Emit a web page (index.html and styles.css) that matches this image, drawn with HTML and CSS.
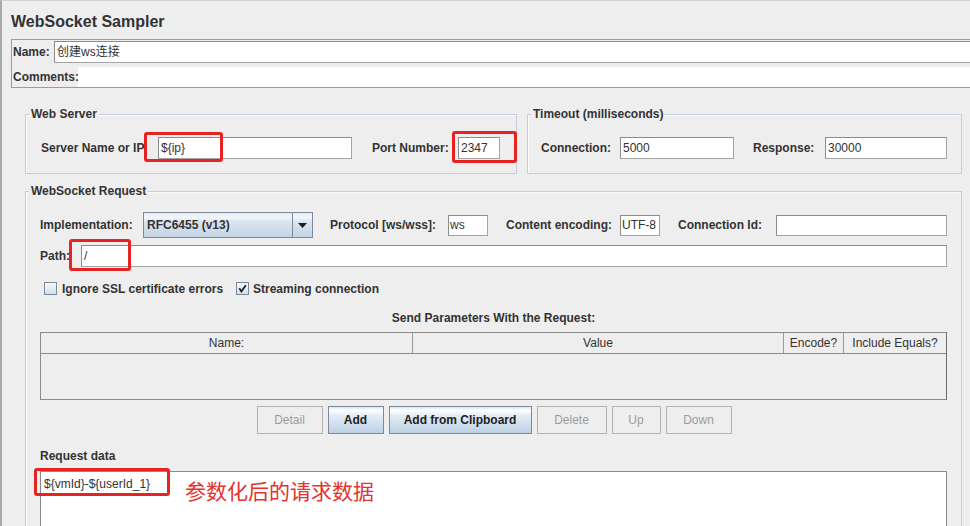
FILE: index.html
```html
<!DOCTYPE html>
<html>
<head>
<meta charset="utf-8">
<title>WebSocket Sampler</title>
<link rel="stylesheet" href="styles.css">
</head>
<body>
<div class="page">
  <h1 class="title">WebSocket Sampler</h1>

  <div class="namebox">
    <div class="nrow">
      <span class="lbl nl-name">Name:</span>
      <div class="field grow">创建ws连接</div>
    </div>
    <div class="nrow crow">
      <span class="lbl nl-comm">Comments:</span>
      <div class="comment-field"></div>
    </div>
  </div>

  <div class="top-groups">
    <div class="group g-server">
      <div class="legend">Web Server</div>
      <div class="srow server-row">
        <span class="lbl l-server">Server Name or IP</span>
        <div class="field f-server">${ip}</div>
        <span class="lbl l-port">Port Number:</span>
        <div class="field f-port">2347</div>
      </div>
    </div>
    <div class="group g-timeout">
      <div class="legend">Timeout (milliseconds)</div>
      <div class="srow timeout-row">
        <span class="lbl l-conn">Connection:</span>
        <div class="field f-conn">5000</div>
        <span class="lbl l-resp">Response:</span>
        <div class="field f-resp">30000</div>
      </div>
    </div>
  </div>

  <div class="group g-request">
    <div class="legend">WebSocket Request</div>

    <div class="rrow impl-row">
      <span class="lbl l-impl">Implementation:</span>
      <div class="combo">
        <span class="combo-text">RFC6455 (v13)</span>
        <span class="combo-btn">
          <svg width="9" height="5" viewBox="0 0 9 5"><path d="M0 0 H9 L4.5 5 Z" fill="#1e1e1e"/></svg>
        </span>
      </div>
      <span class="lbl l-proto">Protocol [ws/wss]:</span>
      <div class="field f-small">ws</div>
      <span class="lbl l-enc">Content encoding:</span>
      <div class="field f-small">UTF-8</div>
      <span class="lbl l-connid">Connection Id:</span>
      <div class="field f-connid"></div>
    </div>

    <div class="rrow path-row">
      <span class="lbl l-path">Path:</span>
      <div class="field f-path">/</div>
    </div>

    <div class="check-row">
      <span class="cbox"></span>
      <span class="lbl cl-ssl">Ignore SSL certificate errors</span>
      <span class="cbox checked">
        <svg width="11" height="11" viewBox="0 0 11 11"><path d="M2.3 5.2 L4.4 8.4 L8.8 2.2" fill="none" stroke="#1a1a1a" stroke-width="1.7"/></svg>
      </span>
      <span class="lbl cl-stream">Streaming connection</span>
    </div>

    <div class="params-title">Send Parameters With the Request:</div>

    <div class="table">
      <div class="thead">
        <div class="th">Name:</div>
        <div class="th">Value</div>
        <div class="th">Encode?</div>
        <div class="th th-last">Include Equals?</div>
      </div>
      <div class="tbody"></div>
    </div>

    <div class="buttons">
      <div class="btn disabled b-detail">Detail</div>
      <div class="btn b-add">Add</div>
      <div class="btn b-clip">Add from Clipboard</div>
      <div class="btn disabled b-delete">Delete</div>
      <div class="btn disabled b-up">Up</div>
      <div class="btn disabled b-down">Down</div>
    </div>

    <div class="lbl data-label">Request data</div>
    <div class="textarea">${vmId}-${userId_1}</div>
  </div>

  <div class="mark m-ip"></div>
  <div class="mark m-port"></div>
  <div class="mark m-path"></div>
  <div class="mark m-data"></div>
  <div class="note">参数化后的请求数据</div>
</div>
</body>
</html>
```

FILE: styles.css
```css
* { box-sizing: border-box; }

html, body {
  margin: 0;
  padding: 0;
}

body {
  width: 970px;
  height: 526px;
  overflow: hidden;
  background: #eeeeee;
  font-family: "Liberation Sans", "Noto Sans CJK SC", sans-serif;
  font-size: 12px;
  color: #333333;
}

.page {
  position: relative;
  width: 970px;
  height: 526px;
  overflow: hidden;
  border-left: 2px solid #a9a9a9;
  border-top: 1px solid #d2d2d2;
}

.title {
  margin: 11px 0 0 9px;
  font-size: 16px;
  line-height: 20px;
  font-weight: bold;
  color: #333333;
}

/* Name / Comments */
.namebox {
  margin: 7px 0 0 9px;
  width: 990px;
  border: 1px solid #9c9c9c;
  padding: 1px 0 0 1px;
}

.nrow {
  display: flex;
  align-items: center;
  height: 22px;
}

.crow {
  height: 21px;
  margin-top: 3px;
}

.lbl {
  font-weight: bold;
  white-space: nowrap;
  flex: none;
  line-height: 14px;
}

.nl-name { width: 41px; }
.nl-comm { width: 65px; }

.field {
  flex: none;
  height: 22px;
  line-height: 20px;
  padding: 0 2px;
  background: #ffffff;
  border: 1px solid #8c8c8c;
  border-right-color: #a4a4a4;
  border-bottom-color: #a4a4a4;
  white-space: nowrap;
  overflow: hidden;
  color: #333333;
}

.grow { flex: 1; }

.comment-field {
  flex: 1;
  height: 20px;
  align-self: flex-end;
  background: #ffffff;
}

/* Groups */
.top-groups {
  display: flex;
  margin-top: 26px;
}

.group {
  border: 1px solid #c3ced9;
  box-shadow: inset 1px 1px 0 #fafafa;
}

.legend {
  width: max-content;
  margin: -8px 0 0 3px;
  padding: 0 2px;
  line-height: 14px;
  font-weight: bold;
  background: #eeeeee;
  color: #333333;
}

.g-server {
  margin-left: 23px;
  width: 492px;
}

.g-timeout {
  margin-left: 10px;
  width: 435px;
}

.srow {
  display: flex;
  align-items: center;
  height: 22px;
  margin: 16px 0 14px;
}

.server-row { padding-left: 15px; }
.l-server { width: 117px; }
.f-server { width: 194px; }
.l-port { margin-left: 20px; width: 86px; }
.f-port { width: 42px; }

.timeout-row { padding-left: 13px; }
.l-conn { width: 79px; }
.f-conn { width: 114px; }
.l-resp { margin-left: 19px; width: 72px; }
.f-resp { width: 122px; }

/* WebSocket Request */
.g-request {
  margin: 17px 0 0 23px;
  width: 937px;
  height: 400px;
}

.rrow {
  display: flex;
  align-items: center;
  padding-left: 14px;
}

.impl-row {
  height: 26px;
  margin-top: 14px;
}

.l-impl { width: 103px; }

.combo {
  flex: none;
  display: flex;
  width: 170px;
  height: 26px;
  border: 1px solid #7a8a99;
  background: linear-gradient(#e3ebf3 0%, #f4f7fa 18%, #dbe5ef 35%, #c4d4e4 100%);
}

.combo-text {
  flex: 1;
  padding-left: 3px;
  line-height: 24px;
  font-weight: bold;
  color: #333333;
}

.combo-btn {
  width: 20px;
  display: flex;
  align-items: center;
  justify-content: center;
  border-left: 1px solid #7a8a99;
}

.l-proto { margin-left: 17px; width: 118px; }
.f-small { width: 40px; height: 21px; line-height: 19px; padding: 0 1px; }
.l-enc { margin-left: 18px; width: 114px; }
.l-connid { margin-left: 18px; width: 98px; }
.f-connid { width: 171px; height: 21px; }

.path-row {
  height: 22px;
  margin-top: 7px;
}

.l-path { width: 41px; }
.f-path { width: 866px; }

.check-row {
  display: flex;
  align-items: center;
  height: 17px;
  margin-top: 13px;
  padding-left: 18px;
}

.cbox {
  flex: none;
  width: 13px;
  height: 13px;
  border: 1px solid #7a8a99;
  background: linear-gradient(#f6f9fc, #d2dfeb);
  display: flex;
  align-items: center;
  justify-content: center;
}

.cl-ssl { margin-left: 5px; width: 174px; }
.cl-stream { margin-left: 4px; }

.params-title {
  margin-top: 14px;
  text-align: center;
  font-weight: bold;
  line-height: 14px;
}

.table {
  margin: 7px 14px 0;
  height: 68px;
  border: 1px solid #8a8a8a;
  border-right-color: #6e6e6e;
}

.thead {
  display: grid;
  grid-template-columns: 372px 371px 60px 1fr;
  height: 21px;
  border-bottom: 1px solid #8a8a8a;
}

.th {
  border-right: 1px solid #9a9a9a;
  text-align: center;
  line-height: 20px;
  color: #333333;
  white-space: nowrap;
}

.th-last { border-right: 0; }

.buttons {
  display: flex;
  justify-content: center;
  gap: 5px;
  margin-top: 6px;
  margin-left: 1px;
}

.btn {
  height: 28px;
  line-height: 26px;
  text-align: center;
  font-weight: bold;
  color: #222222;
  border: 1px solid #7a8a99;
  background: linear-gradient(#dde8f3 0%, #ffffff 14%, #e4ecf5 32%, #bcd1e6 100%);
}

.btn.disabled {
  color: #9c9c9c;
  font-weight: normal;
  border-color: #b2b2b2;
  background: #eeeeee;
}

.b-detail { width: 66px; }
.b-add { width: 56px; }
.b-clip { width: 143px; }
.b-delete { width: 70px; }
.b-up { width: 49px; }
.b-down { width: 66px; }

.data-label {
  margin: 15px 0 0 14px;
}

.textarea {
  margin: 8px 14px 0;
  height: 80px;
  padding: 5px 3px;
  line-height: 14px;
  background: #ffffff;
  border: 1px solid #8a8a8a;
  color: #333333;
}

/* Red annotations drawn over the screenshot */
.mark {
  position: absolute;
  border: 3px solid #e52421;
  border-radius: 3px;
}

.m-ip { left: 142px; top: 131px; width: 79px; height: 30px; }
.m-port { left: 450px; top: 130px; width: 65px; height: 32px; }
.m-path { left: 67px; top: 238px; width: 62px; height: 32px; }
.m-data { left: 32px; top: 467px; width: 136px; height: 28px; }

.note {
  position: absolute;
  left: 183px;
  top: 477px;
  font-family: "Noto Sans CJK SC", sans-serif;
  font-size: 21px;
  line-height: 24px;
  color: #e5322d;
  white-space: nowrap;
}
```
